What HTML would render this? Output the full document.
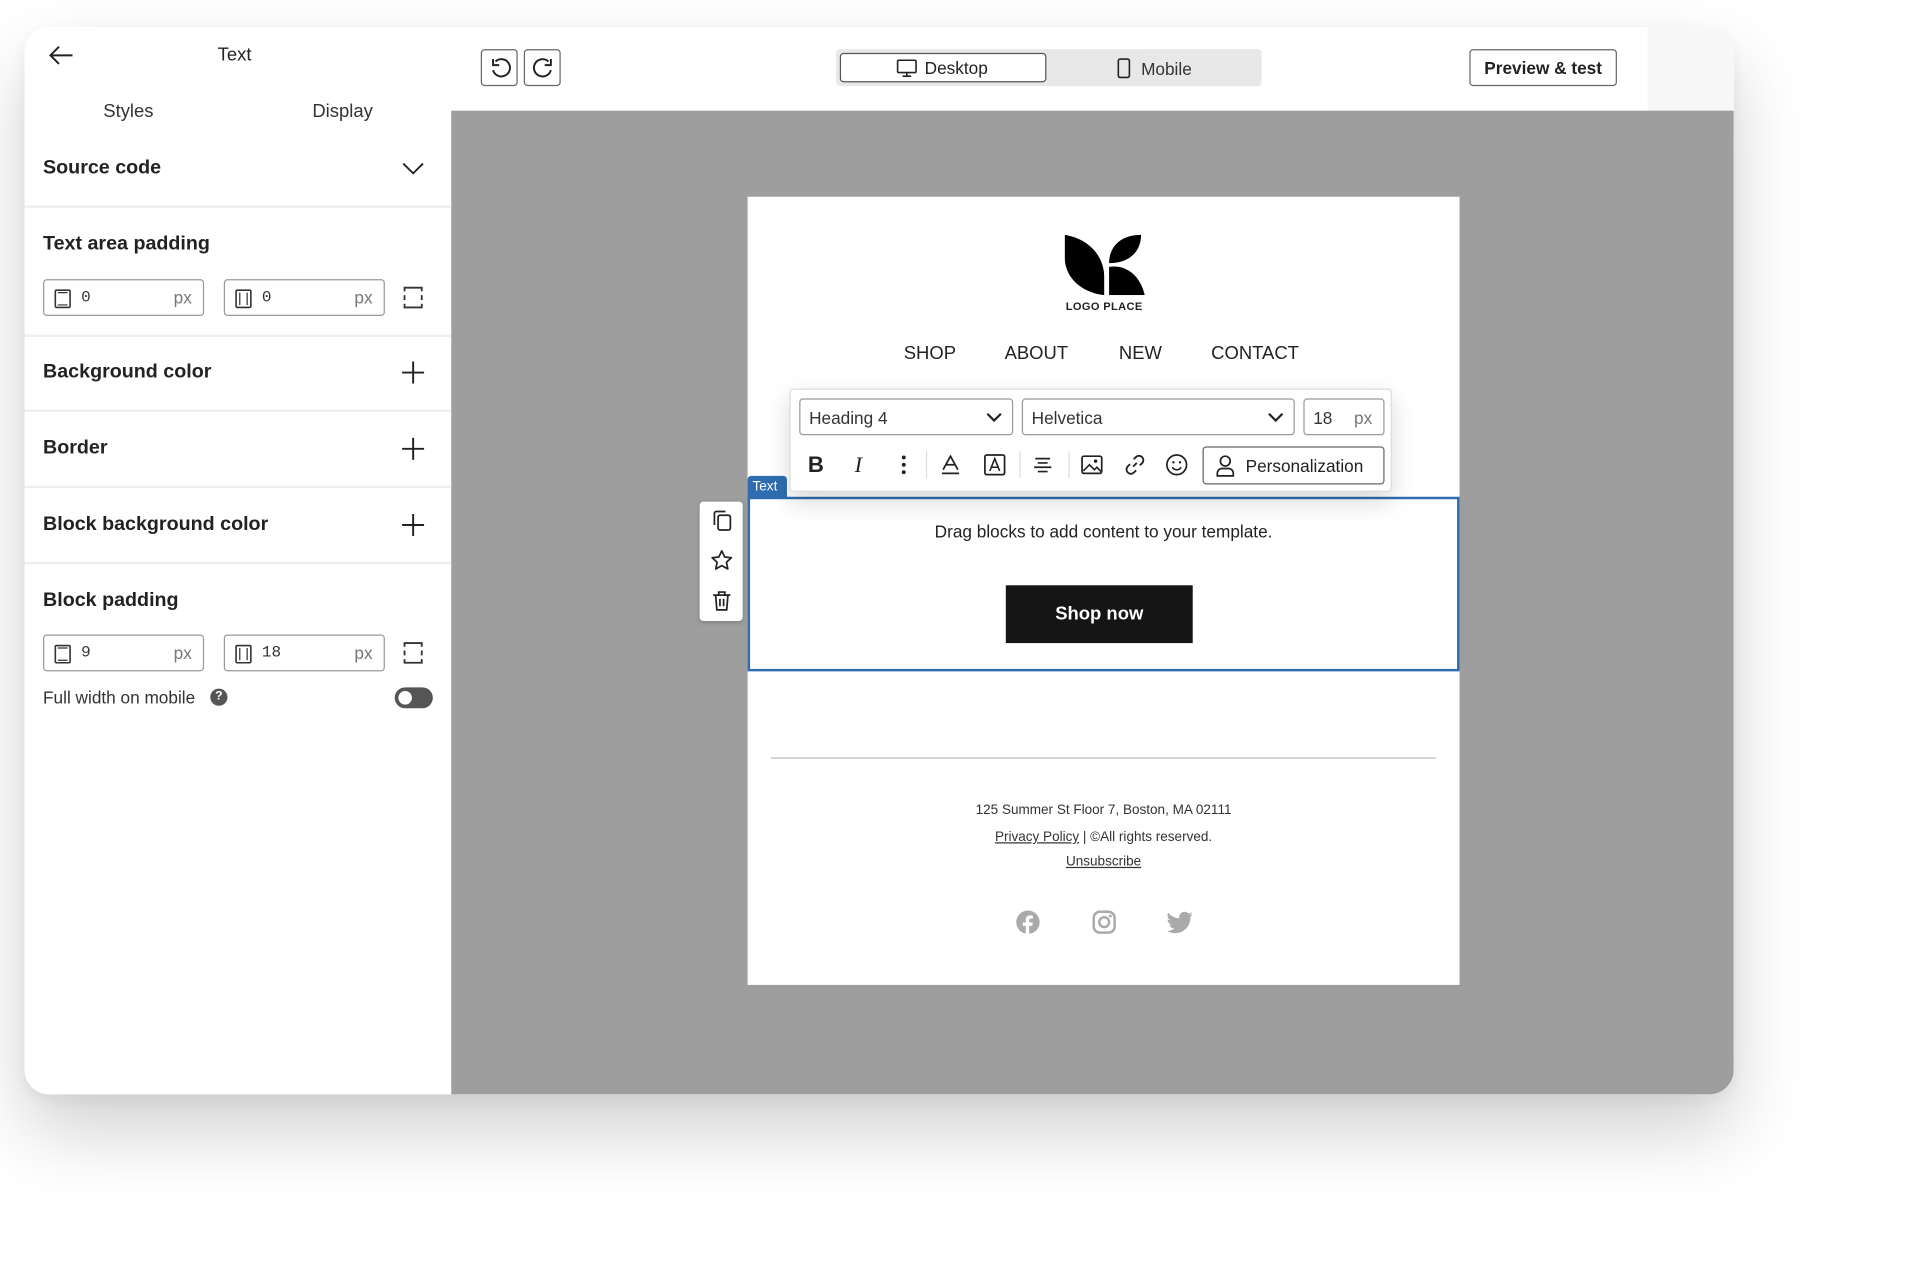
<!DOCTYPE html>
<html><head><meta charset="utf-8"><style>
*{box-sizing:border-box;margin:0;padding:0}
html,body{width:1927px;height:1267px;overflow:hidden;background:#fff;font-family:"Liberation Sans",Arial,sans-serif;color:#222}
#s{position:absolute;left:0;top:0;width:1568px;height:1031px;transform:scale(1.2296);transform-origin:0 0}
.a{position:absolute}
.card{left:20px;top:22px;width:1390px;height:868px;border-radius:20px;background:#fff;box-shadow:0 30px 60px rgba(0,0,0,.18),0 5px 15px rgba(0,0,0,.06);overflow:hidden}
.lbl{font-size:16px;font-weight:bold;color:#222}
.div{left:0;width:347px;height:2px;background:#eee}
.inp{height:30px;width:131px;border:1px solid #999;border-radius:3px;background:#fff}
.inp .v{position:absolute;left:30px;top:6px;font-family:"Liberation Mono",monospace;font-size:13px;color:#333}
.inp .u{position:absolute;right:9px;top:6px;font-size:14px;color:#777}
.inp svg{position:absolute;left:8px;top:7px}
.plus{width:18px;height:18px}
.btn{border:1px solid #666;border-radius:3px;background:#fff}
.sel{height:30px;border:1px solid #999;border-radius:3px;background:#fff;font-size:14px;color:#333;padding:7px 7px}
svg{display:block}
</style></head><body><div id="s">
<div class="a card">
 <div class="a" style="left:0;top:0;width:347px;height:868px;background:#fff">
  <svg class="a" style="left:20px;top:15px" width="20" height="16" viewBox="0 0 20 16"><path d="M19 8H2M8 1L1 8l7 7" fill="none" stroke="#222" stroke-width="1.6"/></svg>
  <div class="a" style="left:157px;top:14px;font-size:15px">Text</div>
  <div class="a" style="left:64px;top:60px;font-size:15px;color:#333">Styles</div>
  <div class="a" style="left:234px;top:60px;font-size:15px;color:#333">Display</div>
  <div class="a lbl" style="left:15px;top:106px">Source code</div>
  <svg class="a" style="left:307px;top:109px" width="18" height="12" viewBox="0 0 18 12"><path d="M1 2l8 8 8-8" fill="none" stroke="#222" stroke-width="1.5"/></svg>
  <div class="a div" style="top:145px"></div>
  <div class="a lbl" style="left:15px;top:168px">Text area padding</div>
  <div class="a inp" style="left:15px;top:205px"><svg width="14" height="16" viewBox="0 0 14 16"><rect x="1" y="1" width="12" height="14" rx="1" fill="none" stroke="#333" stroke-width="1.3"/><path d="M3 3h8M3 13h8" stroke="#333"/></svg><span class="v">0</span><span class="u">px</span></div>
  <div class="a inp" style="left:162px;top:205px"><svg width="14" height="16" viewBox="0 0 14 16"><rect x="1" y="1" width="12" height="14" rx="1" fill="none" stroke="#333" stroke-width="1.3"/><path d="M4 3v10M10 3v10" stroke="#333"/></svg><span class="v">0</span><span class="u">px</span></div>
  <svg class="a" style="left:308px;top:211px" width="16" height="18" viewBox="0 0 16 18"><path d="M1 4V1h14v3M1 14v3h14v-3M1 7v4M15 7v4" fill="none" stroke="#333" stroke-width="1.5"/></svg>
  <div class="a div" style="top:250px"></div>
  <div class="a lbl" style="left:15px;top:272px">Background color</div>
  <svg class="a plus" style="left:307px;top:272px" viewBox="0 0 18 18"><path d="M9 0v18M0 9h18" stroke="#222" stroke-width="1.6"/></svg>
  <div class="a div" style="top:311px"></div>
  <div class="a lbl" style="left:15px;top:334px">Border</div>
  <svg class="a plus" style="left:307px;top:334px" viewBox="0 0 18 18"><path d="M9 0v18M0 9h18" stroke="#222" stroke-width="1.6"/></svg>
  <div class="a div" style="top:373px"></div>
  <div class="a lbl" style="left:15px;top:396px">Block background color</div>
  <svg class="a plus" style="left:307px;top:396px" viewBox="0 0 18 18"><path d="M9 0v18M0 9h18" stroke="#222" stroke-width="1.6"/></svg>
  <div class="a div" style="top:435px"></div>
  <div class="a lbl" style="left:15px;top:458px">Block padding</div>
  <div class="a inp" style="left:15px;top:494px"><svg width="14" height="16" viewBox="0 0 14 16"><rect x="1" y="1" width="12" height="14" rx="1" fill="none" stroke="#333" stroke-width="1.3"/><path d="M3 3h8M3 13h8" stroke="#333"/></svg><span class="v">9</span><span class="u">px</span></div>
  <div class="a inp" style="left:162px;top:494px"><svg width="14" height="16" viewBox="0 0 14 16"><rect x="1" y="1" width="12" height="14" rx="1" fill="none" stroke="#333" stroke-width="1.3"/><path d="M4 3v10M10 3v10" stroke="#333"/></svg><span class="v">18</span><span class="u">px</span></div>
  <svg class="a" style="left:308px;top:500px" width="16" height="18" viewBox="0 0 16 18"><path d="M1 4V1h14v3M1 14v3h14v-3M1 7v4M15 7v4" fill="none" stroke="#333" stroke-width="1.5"/></svg>
  <div class="a" style="left:15px;top:537px;font-size:14px;color:#333">Full width on mobile</div>
  <div class="a" style="left:151px;top:538px;width:14px;height:14px;border-radius:50%;background:#555;color:#fff;font-size:10px;font-weight:bold;text-align:center;line-height:14px">?</div>
  <div class="a" style="left:301px;top:537px;width:31px;height:17px;border-radius:9px;background:#555"><div class="a" style="left:3px;top:3px;width:11px;height:11px;border-radius:50%;background:#fff"></div></div>
 </div>
 <div class="a" style="left:347px;top:0;width:1043px;height:68px;background:#fff"></div>
 <div class="a" style="left:1320px;top:0;width:70px;height:68px;background:#f7f7f7"></div>
 <div class="a btn" style="left:371px;top:18px;width:30px;height:30px"><svg style="margin:6px" width="18" height="18" viewBox="0 0 18 18"><path d="M5 3a7 7 0 1 1-2 7" fill="none" stroke="#222" stroke-width="1.6"/><path d="M3 1v5h5" fill="none" stroke="#222" stroke-width="1.6"/></svg></div>
 <div class="a btn" style="left:406px;top:18px;width:30px;height:30px"><svg style="margin:6px" width="18" height="18" viewBox="0 0 18 18"><path d="M13 3a7 7 0 1 0 2 7" fill="none" stroke="#222" stroke-width="1.6"/><path d="M15 1v5h-5" fill="none" stroke="#222" stroke-width="1.6"/></svg></div>
 <div class="a" style="left:660px;top:18px;width:346px;height:30px;background:#e8e8e8;border-radius:3px"></div>
 <div class="a" style="left:663px;top:21px;width:168px;height:24px;background:#fff;border:1px solid #555;border-radius:3px;font-size:14px;color:#222;padding-left:68px;line-height:22px">Desktop</div>
 <svg class="a" style="left:709px;top:26px" width="17" height="15" viewBox="0 0 17 15"><rect x="1" y="1" width="15" height="10" rx="1" fill="none" stroke="#222" stroke-width="1.3"/><path d="M8.5 11v3M5 14h7" stroke="#222" stroke-width="1.3"/></svg>
 <svg class="a" style="left:888px;top:25px" width="12" height="17" viewBox="0 0 12 17"><rect x="1.5" y="1" width="9" height="15" rx="1.5" fill="none" stroke="#222" stroke-width="1.3"/></svg>
 <div class="a" style="left:908px;top:26px;font-size:14px;color:#333">Mobile</div>
 <div class="a btn" style="left:1175px;top:18px;width:120px;height:30px;font-size:14px;font-weight:bold;text-align:center;line-height:28px;color:#222">Preview &amp; test</div>
 <div class="a" style="left:347px;top:68px;width:1043px;height:800px;background:#9e9e9e"></div>
 <div class="a" style="left:588px;top:138px;width:579px;height:641px;background:#fff">
  <svg class="a" style="left:257px;top:30px" width="66" height="50" viewBox="0 0 66 50"><path d="M1 1C20 4 33 18 33 35V50C14 48 1 35 1 20Z" fill="#000"/><path d="M37 24C37 10 47 1 63 1 63 14 54 24 37 24Z" fill="#000"/><path d="M37 27C50 25 62 33 66 50L37 50Z" fill="#000"/></svg>
  <div class="a" style="left:250px;top:84px;width:80px;text-align:center;font-size:9px;font-weight:bold;letter-spacing:.3px">LOGO PLACE</div>
  <div class="a" style="left:127px;top:119px;font-size:15px">SHOP</div>
  <div class="a" style="left:209px;top:119px;font-size:15px">ABOUT</div>
  <div class="a" style="left:302px;top:119px;font-size:15px">NEW</div>
  <div class="a" style="left:377px;top:119px;font-size:15px">CONTACT</div>
  <div class="a" style="left:0;top:244px;width:579px;height:142px;border:2px solid #2f6db0"></div>
  <div class="a" style="left:0;top:227px;width:32px;height:18px;background:#2f6db0;color:#fff;font-size:11px;padding:3px 4px;border-radius:3px 3px 0 0">Text</div>
  <div class="a" style="left:0;top:264px;width:579px;text-align:center;font-size:14px;color:#222">Drag blocks to add content to your template.</div>
  <div class="a" style="left:210px;top:316px;width:152px;height:47px;background:#151515;color:#fff;font-weight:bold;font-size:15px;text-align:center;line-height:47px">Shop now</div>
  <div class="a" style="left:19px;top:456px;width:541px;height:1px;background:#bbb"></div>
  <div class="a" style="left:0;top:493px;width:579px;text-align:center;font-size:11px;color:#333">125 Summer St Floor 7, Boston, MA 02111</div>
  <div class="a" style="left:0;top:515px;width:579px;text-align:center;font-size:11px;color:#333"><u>Privacy Policy</u> | ©All rights reserved.</div>
  <div class="a" style="left:0;top:535px;width:579px;text-align:center;font-size:11px;color:#333"><u>Unsubscribe</u></div>
  <svg class="a" style="left:218px;top:580px" width="20" height="20" viewBox="0 0 20 20"><circle cx="10" cy="10" r="9.5" fill="#aaa"/><path d="M11 20v-7h2.5l.4-2.8H11V8.5c0-.8.3-1.4 1.4-1.4H14V4.6c-.3 0-1.2-.1-2.2-.1-2.2 0-3.6 1.3-3.6 3.7v2H5.8V13h2.4v7z" fill="#fff"/></svg>
  <svg class="a" style="left:280px;top:580px" width="20" height="20" viewBox="0 0 20 20"><rect x="1.5" y="1.5" width="17" height="17" rx="5" fill="none" stroke="#aaa" stroke-width="2"/><circle cx="10" cy="10" r="4" fill="none" stroke="#aaa" stroke-width="2"/><circle cx="15" cy="5" r="1.2" fill="#aaa"/></svg>
  <svg class="a" style="left:341px;top:581px" width="22" height="18" viewBox="0 0 22 18"><path d="M21 2.5c-.8.3-1.600.6-2.500.7.9-.5 1.6-1.4 1.9-2.4-.8.5-1.8.9-2.8 1.1A4.4 4.4 0 0 0 10.1 5.9 12.4 12.4 0 0 1 1.1 1.3a4.4 4.4 0 0 0 1.4 5.9c-.7 0-1.4-.2-2-.5 0 2.1 1.5 3.900 3.500 4.300-.6.2-1.300.2-2 .1.6 1.8 2.200 3 4.100 3A8.8 8.8 0 0 1 0 16a12.4 12.4 0 0 0 19.1-11V4.5c.8-.6 1.5-1.3 1.9-2z" fill="#aaa"/></svg>
 </div>
 <div class="a" style="left:549px;top:386px;width:35px;height:97px;background:#fff;border-radius:3px;box-shadow:0 1px 4px rgba(0,0,0,.2)">
  <svg class="a" style="left:10px;top:7px" width="16" height="17" viewBox="0 0 16 17"><rect x="5" y="4" width="10" height="12" rx="1.5" fill="none" stroke="#222" stroke-width="1.4"/><path d="M2 12V2.5A1.5 1.5 0 0 1 3.5 1H11" fill="none" stroke="#222" stroke-width="1.4"/></svg>
  <svg class="a" style="left:9px;top:39px" width="18" height="17" viewBox="0 0 18 17"><path d="M9 1l2.4 5 5.4.6-4 3.7 1.1 5.4L9 13l-4.9 2.7 1.1-5.4-4-3.7 5.4-.6z" fill="none" stroke="#222" stroke-width="1.4" stroke-linejoin="round"/></svg>
  <svg class="a" style="left:10px;top:72px" width="16" height="17" viewBox="0 0 16 17"><path d="M1 4h14M5.5 4V1.5h5V4M3 4l1 12h8l1-12M6.5 7v6M9.5 7v6" fill="none" stroke="#222" stroke-width="1.4"/></svg>
 </div>
 <div class="a" style="left:622px;top:294px;width:490px;height:84px;background:#fff;border:1px solid #ddd;border-radius:3px;box-shadow:0 8px 20px rgba(0,0,0,.15)">
  <div class="a sel" style="left:7px;top:7px;width:174px">Heading 4<svg class="a" style="right:8px;top:10px" width="13" height="9" viewBox="0 0 13 9"><path d="M1 1.5l5.5 5.5 5.5-5.5" fill="none" stroke="#222" stroke-width="1.8"/></svg></div>
  <div class="a sel" style="left:188px;top:7px;width:222px">Helvetica<svg class="a" style="right:8px;top:10px" width="13" height="9" viewBox="0 0 13 9"><path d="M1 1.5l5.5 5.5 5.5-5.5" fill="none" stroke="#222" stroke-width="1.8"/></svg></div>
  <div class="a sel" style="left:417px;top:7px;width:66px">18<span style="position:absolute;right:9px;color:#777">px</span></div>
  <div class="a" style="left:14px;top:51px;font-size:18px;font-weight:bold">B</div>
  <div class="a" style="left:52px;top:51px;font-size:18px;font-family:'Liberation Serif',serif;font-style:italic">I</div>
  <svg class="a" style="left:90px;top:53px" width="4" height="16" viewBox="0 0 4 16"><circle cx="2" cy="2" r="1.6" fill="#222"/><circle cx="2" cy="8" r="1.6" fill="#222"/><circle cx="2" cy="14" r="1.6" fill="#222"/></svg>
  <div class="a" style="left:110px;top:50px;width:1px;height:22px;background:#ddd"></div>
  <svg class="a" style="left:122px;top:53px" width="16" height="16" viewBox="0 0 16 16"><path d="M2 12L8 1l6 11M4.5 8h7M1 15h14" fill="none" stroke="#222" stroke-width="1.4"/></svg>
  <svg class="a" style="left:157px;top:52px" width="18" height="18" viewBox="0 0 18 18"><rect x="1" y="1" width="16" height="16" rx="1.5" fill="none" stroke="#222" stroke-width="1.4"/><path d="M5 14L9 4l4 10M6.3 11h5.4" fill="none" stroke="#222" stroke-width="1.3"/></svg>
  <div class="a" style="left:186px;top:50px;width:1px;height:22px;background:#ddd"></div>
  <svg class="a" style="left:197px;top:55px" width="16" height="13" viewBox="0 0 16 13"><path d="M2 1h12M4 4.5h8M1 8h14M4 11.5h8" stroke="#222" stroke-width="1.4"/></svg>
  <div class="a" style="left:226px;top:50px;width:1px;height:22px;background:#ddd"></div>
  <svg class="a" style="left:236px;top:53px" width="18" height="16" viewBox="0 0 18 16"><rect x="1" y="1" width="16" height="14" rx="1.5" fill="none" stroke="#222" stroke-width="1.4"/><path d="M2 13l5-5 4 4 2-2 4 4" fill="none" stroke="#222" stroke-width="1.3"/><circle cx="12" cy="5" r="1.4" fill="#222"/></svg>
  <svg class="a" style="left:271px;top:52px" width="18" height="18" viewBox="0 0 18 18"><path d="M7.5 10.5l3-3M8 4.5l1.8-1.8a3.5 3.5 0 0 1 5 5L13 9.5M10 13.5l-1.8 1.8a3.5 3.5 0 0 1-5-5L5 8.5" fill="none" stroke="#222" stroke-width="1.5"/></svg>
  <svg class="a" style="left:305px;top:52px" width="18" height="18" viewBox="0 0 18 18"><circle cx="9" cy="9" r="8" fill="none" stroke="#222" stroke-width="1.4"/><circle cx="6.3" cy="7" r="1" fill="#222"/><circle cx="11.7" cy="7" r="1" fill="#222"/><path d="M5.5 11a4 4 0 0 0 7 0" fill="none" stroke="#222" stroke-width="1.3"/></svg>
  <div class="a btn" style="left:335px;top:46px;width:148px;height:31px;font-size:14px;padding:7px 0 0 34px">Personalization</div>
  <svg class="a" style="left:346px;top:53px" width="15" height="18" viewBox="0 0 15 18"><circle cx="7.5" cy="5" r="4" fill="none" stroke="#222" stroke-width="1.4"/><path d="M1 17v-2a4 4 0 0 1 4-4h5a4 4 0 0 1 4 4v2z" fill="none" stroke="#222" stroke-width="1.4"/></svg>
 </div>
</div>
</div></body></html>
